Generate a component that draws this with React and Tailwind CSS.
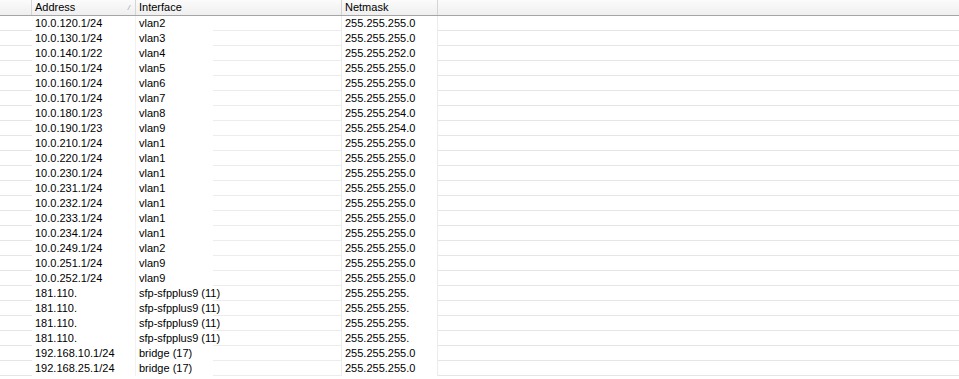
import React from 'react';

const rows = [
  ['10.0.120.1/24', 'vlan2', '255.255.255.0'],
  ['10.0.130.1/24', 'vlan3', '255.255.255.0'],
  ['10.0.140.1/22', 'vlan4', '255.255.252.0'],
  ['10.0.150.1/24', 'vlan5', '255.255.255.0'],
  ['10.0.160.1/24', 'vlan6', '255.255.255.0'],
  ['10.0.170.1/24', 'vlan7', '255.255.255.0'],
  ['10.0.180.1/23', 'vlan8', '255.255.254.0'],
  ['10.0.190.1/23', 'vlan9', '255.255.254.0'],
  ['10.0.210.1/24', 'vlan1', '255.255.255.0'],
  ['10.0.220.1/24', 'vlan1', '255.255.255.0'],
  ['10.0.230.1/24', 'vlan1', '255.255.255.0'],
  ['10.0.231.1/24', 'vlan1', '255.255.255.0'],
  ['10.0.232.1/24', 'vlan1', '255.255.255.0'],
  ['10.0.233.1/24', 'vlan1', '255.255.255.0'],
  ['10.0.234.1/24', 'vlan1', '255.255.255.0'],
  ['10.0.249.1/24', 'vlan2', '255.255.255.0'],
  ['10.0.251.1/24', 'vlan9', '255.255.255.0'],
  ['10.0.252.1/24', 'vlan9', '255.255.255.0'],
  ['181.110.', 'sfp-sfpplus9 (11)', '255.255.255.'],
  ['181.110.', 'sfp-sfpplus9 (11)', '255.255.255.'],
  ['181.110.', 'sfp-sfpplus9 (11)', '255.255.255.'],
  ['181.110.', 'sfp-sfpplus9 (11)', '255.255.255.'],
  ['192.168.10.1/24', 'bridge (17)', '255.255.255.0'],
  ['192.168.25.1/24', 'bridge (17)', '255.255.255.0'],
];

const cols = 'grid grid-cols-[32px_104px_206px_96px_1fr]';

const Header = () => (
  <div className={`${cols} h-[16px] bg-gradient-to-b from-[#fbfbfb] to-[#efefef] border-b border-[#a5a5a5]`}>
    <div className="border-r border-[#d5d5d5]" />
    <div className="relative border-r border-[#d5d5d5] pl-[3px] leading-[15px]">
      Address
      <span className="absolute right-[5px] top-0 text-[8px] text-[#9a9a9a] italic">/</span>
    </div>
    <div className="border-r border-[#d5d5d5] pl-[3px] leading-[15px]">Interface</div>
    <div className="border-r border-[#d5d5d5] pl-[3px] leading-[15px]">Netmask</div>
    <div />
  </div>
);

const Row = ({ addr, iface, mask }) => (
  <div className={`${cols} h-[15px]`}>
    <div className="border-b border-[#e6e6e6]" />
    <div className="pl-[3px] leading-[15px] border-r border-[#f2f2f2]">{addr}</div>
    <div className="flex border-r border-[#ececec]">
      <div className="w-[77px] pl-[3px] leading-[15px] whitespace-nowrap">{iface}</div>
      <div className="flex-1 border-b border-[#ececec]" />
    </div>
    <div className="pl-[3px] leading-[15px] border-r border-[#ececec]">{mask}</div>
    <div className="border-b border-[#e6e6e6]" />
  </div>
);

const App = () => (
  <div
    className="w-[959px] h-[379px] overflow-hidden bg-white text-[11px] text-black"
    style={{ fontFamily: '"Liberation Sans", Arial, sans-serif' }}
  >
    <Header />
    {rows.map(([addr, iface, mask], i) => (
      <Row key={i} addr={addr} iface={iface} mask={mask} />
    ))}
  </div>
);

export default App;
